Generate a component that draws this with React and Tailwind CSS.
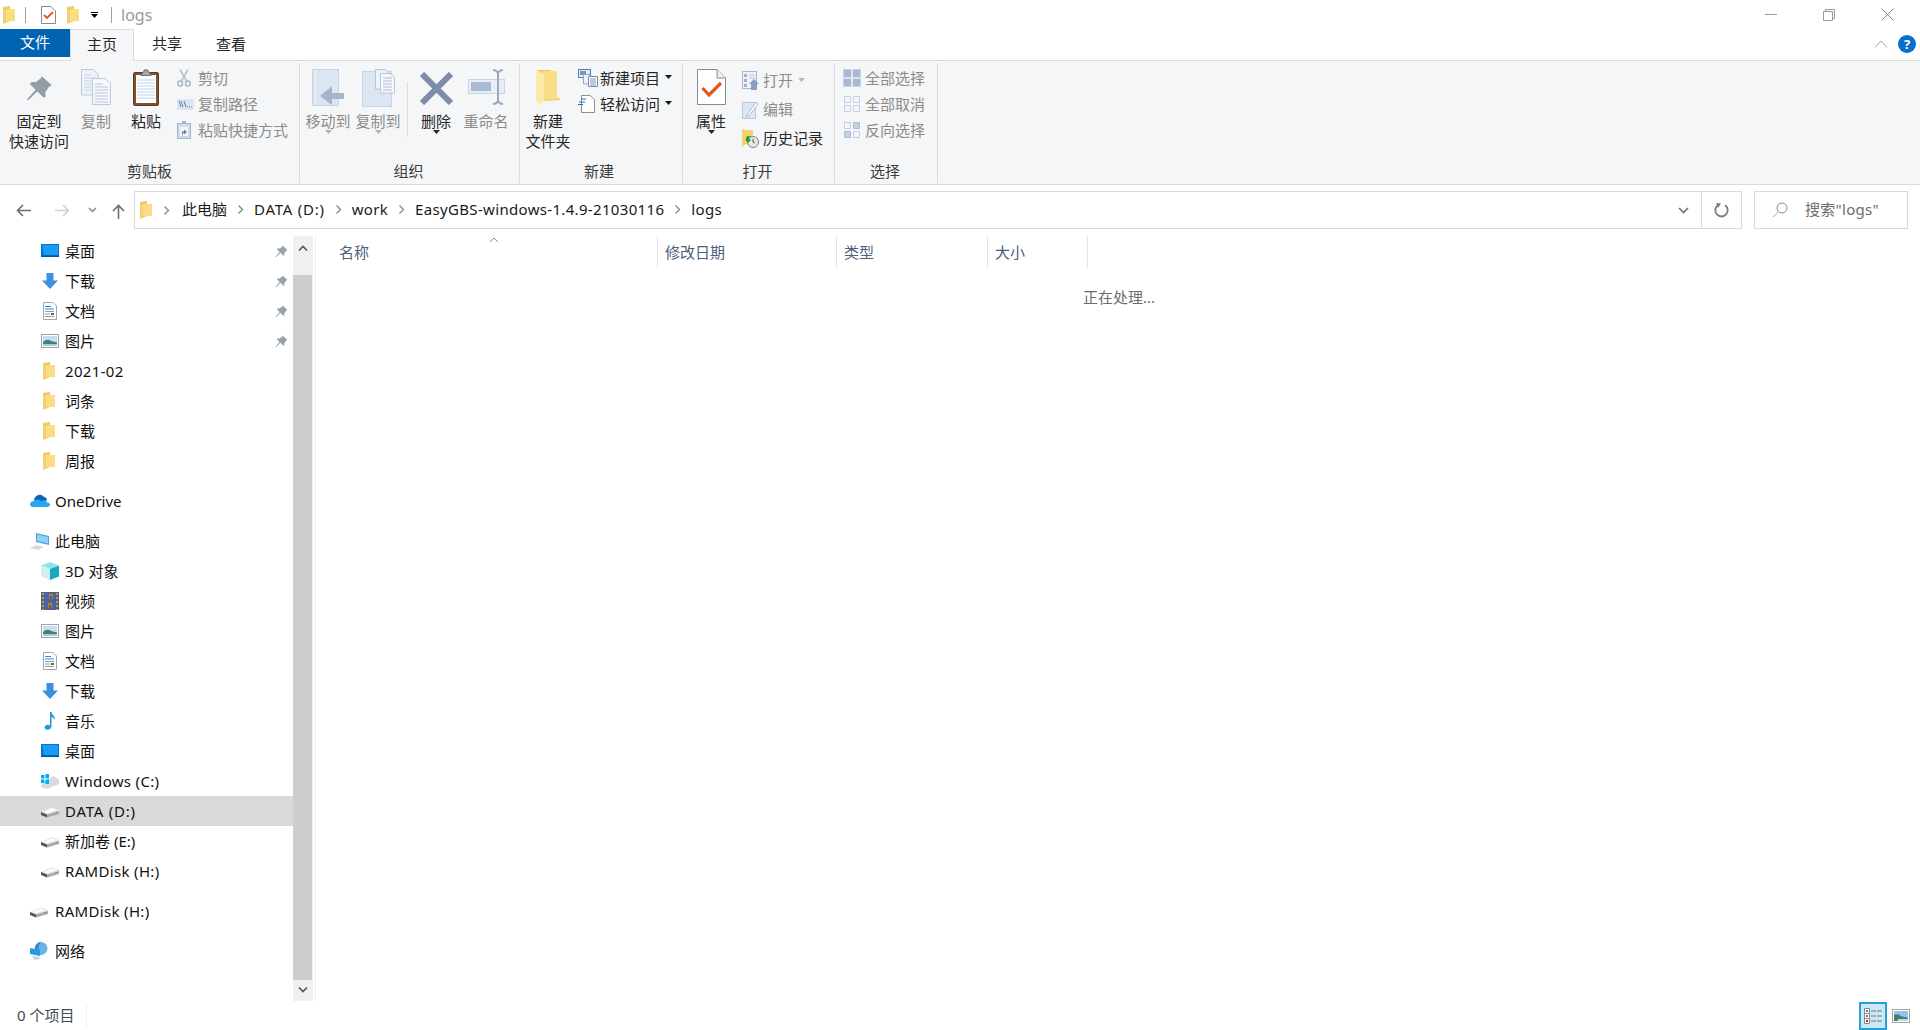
import React from 'react';

// Windows 10 File Explorer, "logs" folder while it is still loading

const Pin = ({ size = 13, color = '#97a1aa' }) => (
  <svg width={size} height={size} viewBox="0 0 24 24">
    <path fill={color} d="M14 1 L23 9 L20.5 10.5 L17 15.5 L17.5 19 L15.5 20 L10 14.5 L2 22.5 L1 21.5 L8.5 13 L3.5 8 L5 6 L8.5 6.5 L13 3 Z" />
  </svg>
);

const Folder = ({ w = 12, h = 18 }) => (
  <svg width={w} height={h} viewBox="0 0 12 18">
    <path fill="#f3c75f" d="M0 1 L7 0 L7 15 L0 18 Z" />
    <path fill="#fbdc85" d="M1 3 L12 3 L12 15 L3 15 L1 17 Z" />
    <path fill="#f6d06e" d="M0 2 L3 3.5 L3 15.5 L0 17.5 Z" />
  </svg>
);

const BigFolder = () => (
  <svg width="24" height="36" viewBox="0 0 24 36">
    <path fill="#f2c55c" d="M1 1 L15 1 L15 30 L1 30 Z" />
    <path fill="#fbdd88" d="M7 2 L21 2 L21 28 L24 29 L24 30 L7 30 Z" />
    <path fill="#ffe9a8" d="M0 0 L8 5 L8 32 L2 36 L0 30 Z" />
    <path fill="#f7cf68" d="M8 5 L8 30 L24 30 L24 31 L8 32 Z" />
  </svg>
);

const Desktop = () => (
  <svg width="18" height="14" viewBox="0 0 18 14">
    <rect width="18" height="13" fill="#0078d7" />
    <path fill="#1b9cf2" d="M1 1 H17 V11 H3 Z" />
    <rect x="0" y="11.5" width="18" height="1.5" fill="#005a9e" />
  </svg>
);

const Download = () => (
  <svg width="18" height="17" viewBox="0 0 18 17">
    <path fill="#3d8fe0" d="M5.5 0 H12.5 V7.5 H17 L9 16 L1 7.5 H5.5 Z" />
  </svg>
);

const Doc = () => (
  <svg width="16" height="18" viewBox="0 0 16 18">
    <path fill="#fff" stroke="#a5a5a5" d="M1.5 .5 H11 L14.5 4 V17.5 H1.5 Z" />
    <path stroke="#2a8fdc" d="M3 4.5 H9 M3 7 H12" />
    <path stroke="#9c9c9c" d="M3 9.5 H12 M3 12 H8 M3 14.5 H12" />
    <rect x="9" y="11" width="3" height="2" fill="#3d7a5a" />
  </svg>
);

const Picture = () => (
  <svg width="18" height="14" viewBox="0 0 18 14">
    <rect x=".5" y=".5" width="17" height="13" fill="#fff" stroke="#a3a3a3" />
    <rect x="2" y="2" width="14" height="10" fill="#c5def2" />
    <path fill="#47806f" d="M2 8 Q6 4 10 7 L16 8.5 V12 H2 Z" />
    <path fill="#a9c8d9" d="M2 10 H16 V12 H2 Z" />
  </svg>
);

const Onedrive = () => (
  <svg width="20" height="14" viewBox="0 0 20 14">
    <path fill="#0a64b8" d="M4 6 C5 1 11 -1 14 3 C16 3 17 5 17 6 L8 11 Z" />
    <path fill="#27a5ee" d="M3 13 C-1 13 -1 7 4 7 C6 5 9 5 11 7 C13 5.5 17 6 17 8.5 C21 8.5 21 13 17 13 Z" />
  </svg>
);

const Computer = () => (
  <svg width="20" height="17" viewBox="0 0 20 17">
    <path fill="#4ba6e0" d="M6 0 L19 3 V12 L6 9 Z" />
    <path fill="#8fd0f5" d="M7 1.5 L18 4 V10.5 L7 8 Z" />
    <path fill="#d6d8da" d="M0 15 L6 12 L14 14 L8 17 Z" />
  </svg>
);

const Cube = () => (
  <svg width="18" height="18" viewBox="0 0 18 18">
    <path fill="#8fe3ee" d="M9 0 L18 3.5 L9 7 L0 3.5 Z" />
    <path fill="#d2f1ee" d="M0 3.5 L9 7 V18 L0 14.5 Z" />
    <path fill="#1ba7bd" d="M18 3.5 L9 7 V18 L18 14.5 Z" />
  </svg>
);

const Film = () => (
  <svg width="18" height="18" viewBox="0 0 18 18">
    <rect width="18" height="18" fill="#5e5e5e" />
    <rect x="4" y="1" width="10" height="7.5" fill="#3f68c2" />
    <rect x="4" y="9.5" width="10" height="7.5" fill="#3f68c2" />
    <rect x="8" y="2" width="4" height="5" fill="#c9772f" />
    <rect x="9" y="4" width="2" height="3" fill="#2f7d3b" />
    <rect x="7" y="11" width="4" height="5" fill="#c9772f" />
    <rect x="8" y="13" width="2" height="3" fill="#2f7d3b" />
    <path stroke="#e4e4e4" strokeDasharray="2 2" d="M2 1 V18 M16 1 V18" />
  </svg>
);

const Music = () => (
  <svg width="12" height="18" viewBox="0 0 12 18">
    <path fill="#1e9be8" d="M6 0 H7.5 C8 3 11.5 4 11 8 C10 6 9 5.5 7.5 5 V14.5 C7.5 17 4.5 18 2.5 17.5 C0 17 0 14 2.5 13 C4 12.5 5 12.7 6 13.2 Z" />
  </svg>
);

const Windows = () => (
  <svg width="18" height="15" viewBox="0 0 18 15">
    <path fill="#d9dbdd" d="M0 11 L12 2 L18 5 V10 L6 15 L0 13 Z" />
    <path fill="#00adef" d="M0 1 H3.5 V4.5 H0 Z M4.5 0 H8 V4.5 H4.5 Z M0 5.5 H3.5 V9 H0 Z M4.5 5.5 H8 V10 H4.5 Z" />
  </svg>
);

const Drive = () => (
  <svg className="mt-[3px]" width="18" height="11" viewBox="0 0 18 11">
    <path fill="#e4e4e4" d="M0 5 L11 0 L18 3 V6 L6 9 Z" />
    <path fill="#fafafa" d="M2 5 L11 1 L16 3 L6 6.5 Z" />
    <path fill="#555" d="M0 5 L6 7.5 V10.5 L0 8 Z" />
    <path fill="#a9a9a9" d="M6 7.5 L18 4 V7 L6 10.5 Z" />
    <rect x="14.5" y="5" width="1.5" height="1" fill="#3aa655" />
  </svg>
);

const Network = () => (
  <svg width="18" height="18" viewBox="0 0 18 18">
    <circle cx="11" cy="6.5" r="6.5" fill="#6db3e8" />
    <path fill="#3f87c9" d="M11 0 C8 3 8 10 11 13 C9 13 5 10 5 6.5 C5 3 8 0 11 0 Z" />
    <path fill="#1f9be3" d="M0 6 L10 8 V14 L0 12 Z" />
    <path fill="#cfd3d6" d="M2 14 L8 14.5 L11 17 L4 18 Z" />
  </svg>
);

const Copy = () => (
  <svg width="30" height="36" viewBox="0 0 30 36">
    <path fill="#eef2f9" stroke="#bcc9de" d="M.5 .5 H12 L17 5 V26 H.5 Z" />
    <path stroke="#c7d3e6" d="M3 6 H10 M3 9 H14 M3 12 H14 M3 15 H14 M3 18 H14 M3 21 H14" />
    <path fill="#f5f7fb" stroke="#bcc9de" d="M11.5 9.5 H24 L29.5 14 V35.5 H11.5 Z" />
    <path stroke="#b7c5dc" d="M14 15 H22 M14 18 H27 M14 21 H27 M14 24 H27 M14 27 H27 M14 30 H27 M14 33 H27" />
  </svg>
);

const Paste = () => (
  <svg width="26" height="37" viewBox="0 0 26 37">
    <rect x=".5" y="3.5" width="25" height="33" rx="1.5" fill="#7d5233" stroke="#5d3a20" />
    <rect x="3" y="6" width="20" height="28" fill="#fff" />
    <path stroke="#b9d3ec" d="M4 11 H22 M4 14 H22 M4 17 H22 M4 20 H22 M4 23 H22 M4 26 H22 M4 29 H22" />
    <path fill="#aaa" stroke="#6f6f6f" d="M8 6.5 L10 3 H11 V1 H15 V3 H16 L18 6.5 Z" />
  </svg>
);

const Scissors = () => (
  <svg width="14" height="18" viewBox="0 0 14 18">
    <g fill="none" stroke="#a9b5c9" strokeWidth="1.5">
      <circle cx="3" cy="14.5" r="2.5" />
      <circle cx="11" cy="14.5" r="2.5" />
      <path d="M4.5 12 L11 .5 M9.5 12 L3 .5" />
    </g>
  </svg>
);

const CopyPath = () => (
  <svg width="17" height="11" viewBox="0 0 17 11">
    <rect width="17" height="11" fill="#dbe4f1" />
    <path stroke="#76859b" fill="none" d="M2 2 L4 8 M4 2 L6 8 M7 2 L9 8" />
    <path stroke="#76859b" strokeDasharray="1 1" d="M10 8 H16" />
  </svg>
);

const PasteShortcut = () => (
  <svg width="14" height="18" viewBox="0 0 14 18">
    <rect x=".5" y="2.5" width="13" height="15" fill="#cfdaea" stroke="#a9b6ca" />
    <rect x="5" y="0" width="4" height="3" fill="#a9b6ca" />
    <rect x="3" y="6" width="8" height="9" fill="#f3f6fb" />
    <path fill="#71819b" d="M5 14 V10.5 H7 V8.5 L10 11 L7 13.5 V12 H6 V14 Z" />
  </svg>
);

const MoveTo = () => (
  <svg width="33" height="38" viewBox="0 0 33 38">
    <rect x=".5" y=".5" width="26" height="36" fill="#dce5f2" stroke="#c7d4e6" />
    <rect x="3" y="1" width="1" height="35" fill="#eef3fa" />
    <path fill="#a5b5cc" d="M20 17 V24 H32 V30 H20 V36 L8 27 Z" />
  </svg>
);

const CopyTo = () => (
  <svg width="33" height="38" viewBox="0 0 33 38">
    <rect x=".5" y="2.5" width="29" height="35" fill="#dce5f2" stroke="#c7d4e6" />
    <path fill="#eef2f9" stroke="#b7c5dc" d="M13.5 .5 H23 L27 4 V20 H13.5 Z" />
    <path fill="#f5f7fb" stroke="#b7c5dc" d="M18.5 4.5 H28 L32.5 8 V24 H18.5 Z" />
    <path stroke="#aebcd3" d="M21 9 H30 M21 12 H30 M21 15 H30 M21 18 H30 M21 21 H30" />
  </svg>
);

const Delete = () => (
  <svg width="33" height="33" viewBox="0 0 33 33">
    <path stroke="#7c8ca9" strokeWidth="6" d="M2 2 L31 31 M31 2 L2 31" />
  </svg>
);

const Rename = () => (
  <svg width="37" height="36" viewBox="0 0 37 36">
    <rect x=".5" y="10.5" width="36" height="14" fill="#e8eef8" stroke="#c7d4e6" />
    <rect x="3" y="13" width="20" height="9" fill="#a9b9d0" />
    <path stroke="#9aa9c0" strokeWidth="2" fill="none" d="M25 1 C28 1 29 2 30 4 C31 2 32 1 35 1 M30 4 V32 M25 35 C28 35 29 34 30 32 C31 34 32 35 35 35" />
  </svg>
);

const NewItem = () => (
  <svg width="20" height="18" viewBox="0 0 20 18">
    <rect x=".5" y=".5" width="12" height="8" fill="#e2ecf8" stroke="#3f87b8" />
    <rect x="2" y="2" width="6" height="4" fill="#7d94b3" />
    <path fill="#eef2f9" stroke="#9fa8b4" d="M5.5 5.5 H12 V15 H5.5 Z" />
    <path fill="#fff" stroke="#6e8cb0" d="M10.5 7.5 H19.5 V17.5 H10.5 Z" />
    <path stroke="#7f95b5" d="M12 10 H18 M12 12 H18 M12 14 H18 M12 16 H18" />
  </svg>
);

const EasyAccess = () => (
  <svg width="17" height="18" viewBox="0 0 17 18">
    <path fill="#fff" stroke="#8f8f8f" d="M3.5 .5 H12 L16.5 4.5 V17.5 H3.5 Z" />
    <path stroke="#1a72bb" strokeWidth="1.2" d="M3 4 H8 M1 7 H7 M0 9.5 H5" />
  </svg>
);

const Properties = () => (
  <svg width="29" height="36" viewBox="0 0 29 36">
    <path fill="#fff" stroke="#8a8a8a" d="M.5 .5 H20 L28.5 9 V35.5 H.5 Z" />
    <path fill="#eee" stroke="#8a8a8a" d="M20 .5 V9 H28.5" />
    <path fill="none" stroke="#e8541c" strokeWidth="3.2" d="M5.5 19 L12 26 L24 14" />
  </svg>
);

const OpenIcon = () => (
  <svg width="17" height="19" viewBox="0 0 17 19">
    <rect x=".5" y=".5" width="14" height="17" fill="#eef2f9" stroke="#a9b6ca" />
    <path fill="#a0b0c8" d="M2 3 H5 V6 H2 Z M2 8 H5 V11 H2 Z M2 13 H5 V16 H2 Z" />
    <path stroke="#b7c3d6" d="M7 4 H13 M7 7 H13" />
    <path fill="#8ba0bc" d="M12 8 L17 13 H15 V19 H9 V13 H7 Z" />
  </svg>
);

const EditIcon = () => (
  <svg width="16" height="18" viewBox="0 0 16 18">
    <rect x=".5" y="1.5" width="13" height="16" fill="#dde6f3" stroke="#b9c7dc" />
    <path fill="#fff" stroke="#a9b9d0" d="M5 14 L14 1 L16 3 L7 15 L4.5 16 Z" />
  </svg>
);

const History = () => (
  <svg width="17" height="19" viewBox="0 0 17 19">
    <path fill="#f6d26e" d="M0 0 L4 1 H11 V15 H4 L0 18 Z" />
    <circle cx="11" cy="13" r="5.5" fill="#e9e9e9" stroke="#808080" />
    <path stroke="#555" fill="none" d="M11 10 V13 L13 14" />
    <path fill="#1ea32c" d="M5 7 L9 7.5 L6.5 9.5 L9 11 L6 14 L3.5 11 Z" />
  </svg>
);

const Grid4 = () => (
  <svg width="18" height="18" viewBox="0 0 18 18">
    <rect width="18" height="18" fill="#c5d2e5" />
    <path fill="#a9b9d3" d="M1 1 H8 V8 H1 Z M10 1 H17 V8 H10 Z M1 10 H8 V17 H1 Z M10 10 H17 V17 H10 Z" />
    <path stroke="#eef3fa" strokeWidth="1.2" d="M9 0 V18 M0 9 H18" />
  </svg>
);

const GridNone = () => (
  <svg width="18" height="18" viewBox="0 0 18 18">
    <path fill="#f3f6fa" stroke="#c2cfe2" d="M1.5 1.5 H7.5 V7.5 H1.5 Z M10.5 1.5 H16.5 V7.5 H10.5 Z M1.5 10.5 H7.5 V16.5 H1.5 Z M10.5 10.5 H16.5 V16.5 H10.5 Z" />
  </svg>
);

const GridInvert = () => (
  <svg width="18" height="18" viewBox="0 0 18 18">
    <path fill="#f3f6fa" stroke="#c2cfe2" d="M1.5 1.5 H7.5 V7.5 H1.5 Z M10.5 10.5 H16.5 V16.5 H10.5 Z" />
    <path fill="#c5d2e5" stroke="#aebcd4" d="M10.5 1.5 H16.5 V7.5 H10.5 Z M1.5 10.5 H7.5 V16.5 H1.5 Z" />
  </svg>
);

const Caret = ({ color = '#1a1a1a' }) => (
  <svg width="7" height="4" viewBox="0 0 7 4">
    <path fill={color} d="M0 0 H7 L3.5 4 Z" />
  </svg>
);

const Chev = () => (
  <svg width="7" height="11" viewBox="0 0 7 11">
    <path fill="none" stroke="#8a8a8a" strokeWidth="1.4" d="M1.5 1.5 L5.5 5.5 L1.5 9.5" />
  </svg>
);

// big ribbon button: icon on top, one or two lines below
const LargeBtn = ({ icon, lines, muted, caret, className }) => (
  <div className={`flex flex-col items-center ${className}`}>
    <div className="h-[50px] pt-[8px] flex items-start justify-center">{icon}</div>
    {lines.map((l) => (
      <div key={l} className={`h-[20px] leading-[20px] whitespace-nowrap ${muted ? 'text-[#8c8c8c]' : 'text-[#262626]'}`}>{l}</div>
    ))}
    {caret && <div className="mt-[-1px]"><Caret color={muted ? '#b5b5b5' : '#262626'} /></div>}
  </div>
);

const SmallBtn = ({ icon, label, muted, caret, caretColor, h = 'h-[26px]', iconW = 'w-[21px]' }) => (
  <div className={`flex items-center ${h}`}>
    <div className={`${iconW} flex justify-start`}>{icon}</div>
    <span className={`whitespace-nowrap ${muted ? 'text-[#8c8c8c]' : 'text-[#262626]'}`}>{label}</span>
    {caret && <span className="ml-[5px] mb-[2px]"><Caret color={caretColor} /></span>}
  </div>
);

const Group = ({ label, className, labelClass = 'pr-[2px]', children }) => (
  <div className={`flex flex-col h-[120px] mt-[2px] border-r border-[#dcdcdc] ${className}`}>
    <div className="flex flex-1 mt-[-2px]">{children}</div>
    <div className={`h-[20px] mb-[2px] leading-[20px] text-center text-[#3c3c3c] ${labelClass}`}>{label}</div>
  </div>
);

const Ribbon = () => (
  <div className="flex h-[124px] bg-[#f5f6f7] border-b border-[#dadbdc]">
    <Group label="剪贴板" className="w-[300px]" labelClass="pr-0">
      <LargeBtn className="w-[78px]" icon={<div className="pt-[6px]"><Pin size={27} color="#939da7" /></div>} lines={['固定到', '快速访问']} />
      <LargeBtn className="w-[36px]" muted icon={<Copy />} lines={['复制']} />
      <LargeBtn className="w-[50px] ml-[7px]" icon={<Paste />} lines={['粘贴']} />
      <div className="ml-[6px] pt-[4px]">
        <SmallBtn muted icon={<Scissors />} label="剪切" />
        <SmallBtn muted icon={<CopyPath />} label="复制路径" />
        <SmallBtn muted icon={<PasteShortcut />} label="粘贴快捷方式" />
      </div>
    </Group>
    <Group label="组织" className="w-[220px]">
      <LargeBtn className="w-[50px] ml-[3px]" muted caret icon={<MoveTo />} lines={['移动到']} />
      <LargeBtn className="w-[50px]" muted caret icon={<CopyTo />} lines={['复制到']} />
      <div className="w-px h-[55px] mt-[21px] ml-[4px] bg-[#dcdcdc]" />
      <LargeBtn className="w-[50px] ml-[3px]" caret icon={<div className="pt-[3px]"><Delete /></div>} lines={['删除']} />
      <LargeBtn className="w-[48px] ml-[1px]" muted icon={<Rename />} lines={['重命名']} />
    </Group>
    <Group label="新建" className="w-[163px]" labelClass="pr-[4px]">
      <LargeBtn className="w-[56px]" icon={<BigFolder />} lines={['新建', '文件夹']} />
      <div className="ml-[2px] pt-[4px]">
        <SmallBtn icon={<NewItem />} label="新建项目" caret iconW="w-[22px]" />
        <SmallBtn icon={<EasyAccess />} label="轻松访问" caret iconW="w-[22px]" />
      </div>
    </Group>
    <Group label="打开" className="w-[152px]">
      <LargeBtn className="w-[56px]" caret icon={<Properties />} lines={['属性']} />
      <div className="ml-[3px] pt-[5px]">
        <SmallBtn muted icon={<OpenIcon />} label="打开" caret caretColor="#b8b8b8" h="h-[29px]" />
        <SmallBtn muted icon={<EditIcon />} label="编辑" h="h-[29px]" />
        <SmallBtn icon={<History />} label="历史记录" h="h-[29px]" />
      </div>
    </Group>
    <Group label="选择" className="w-[103px]">
      <div className="ml-[8px] pt-[4px]">
        <SmallBtn muted icon={<Grid4 />} label="全部选择" iconW="w-[22px]" />
        <SmallBtn muted icon={<GridNone />} label="全部取消" iconW="w-[22px]" />
        <SmallBtn muted icon={<GridInvert />} label="反向选择" iconW="w-[22px]" />
      </div>
    </Group>
  </div>
);

const NavRow = ({ icon, label, pinned, top, active, latin, wide }) => (
  <div className={`flex items-center h-[30px] ${active ? 'bg-[#d9d9d9]' : ''}`}>
    <div className={`${top ? 'w-[55px] pl-[30px]' : 'w-[65px] pl-[41px]'} flex items-center shrink-0`}>{icon}</div>
    <span className={`flex-1 text-[#111] whitespace-nowrap ${latin ? 'tracking-[0.33px]' : ''} ${wide ? 'tracking-[0.75px]' : ''}`}>{label}</span>
    {pinned && <span className="pr-[5px] pt-[1px]"><Pin /></span>}
  </div>
);

const NavPane = () => (
  <div className="flex w-[316px] shrink-0 border-r border-[#f0f0f0]">
    <div className="w-[293px] shrink-0">
      <NavRow icon={<Desktop />} label="桌面" pinned />
      <NavRow icon={<Download />} label="下载" pinned />
      <NavRow icon={<div className="pl-[1px]"><Doc /></div>} label="文档" pinned />
      <NavRow icon={<Picture />} label="图片" pinned />
      <NavRow icon={<div className="pl-[2px]"><Folder /></div>} label="2021-02" latin />
      <NavRow icon={<div className="pl-[2px]"><Folder /></div>} label="词条" />
      <NavRow icon={<div className="pl-[2px]"><Folder /></div>} label="下载" />
      <NavRow icon={<div className="pl-[2px]"><Folder /></div>} label="周报" />
      <div className="h-[10px]" />
      <NavRow top icon={<Onedrive />} label="OneDrive" />
      <div className="h-[10px]" />
      <NavRow top icon={<Computer />} label="此电脑" />
      <NavRow icon={<Cube />} label="3D 对象" />
      <NavRow icon={<Film />} label="视频" />
      <NavRow icon={<Picture />} label="图片" />
      <NavRow icon={<div className="pl-[1px]"><Doc /></div>} label="文档" />
      <NavRow icon={<Download />} label="下载" />
      <NavRow icon={<div className="pl-[3px]"><Music /></div>} label="音乐" />
      <NavRow icon={<Desktop />} label="桌面" />
      <NavRow icon={<Windows />} label="Windows (C:)" latin />
      <NavRow icon={<Drive />} label="DATA (D:)" active wide />
      <NavRow icon={<Drive />} label="新加卷 (E:)" />
      <NavRow icon={<Drive />} label="RAMDisk (H:)" latin />
      <div className="h-[10px]" />
      <NavRow top icon={<Drive />} label="RAMDisk (H:)" latin />
      <div className="h-[10px]" />
      <NavRow top icon={<Network />} label="网络" />
    </div>
    <div className="w-[20px] bg-[#f0f0f0] flex flex-col">
      <div className="h-[39px] flex justify-center pt-[9px]">
        <svg width="10" height="6" viewBox="0 0 10 6"><path fill="none" stroke="#555" strokeWidth="1.6" d="M1 5.5 L5 1.5 L9 5.5" /></svg>
      </div>
      <div className="flex-1 bg-[#cdcdcd] mr-[1px]" />
      <div className="h-[21px] flex justify-center pt-[7px]">
        <svg width="10" height="6" viewBox="0 0 10 6"><path fill="none" stroke="#555" strokeWidth="1.6" d="M1 .5 L5 4.5 L9 .5" /></svg>
      </div>
    </div>
  </div>
);

const HeaderCell = ({ label, className }) => (
  <div className={`h-[32px] leading-[32px] border-r border-[#e5e5e5] text-[#4c607a] text-[15px] ${className}`}>{label}</div>
);

const FileList = () => (
  <div className="flex-1">
    <div className="relative flex pl-[8px]">
      <HeaderCell label="名称" className="w-[334px] pl-[15px]" />
      <HeaderCell label="修改日期" className="w-[179px] pl-[7px]" />
      <HeaderCell label="类型" className="w-[151px] pl-[7px]" />
      <HeaderCell label="大小" className="w-[100px] pl-[7px]" />
      <svg className="absolute left-[173px] top-[1px]" width="10" height="6" viewBox="0 0 10 6">
        <path fill="none" stroke="#8c8c8c" d="M1 5 L5 1 L9 5" />
      </svg>
    </div>
    <div className="pl-[767px] mt-[19px] leading-[20px] text-[15px] text-[#6d6d6d]">正在处理...</div>
  </div>
);

const Crumb = ({ children, className = '' }) => (
  <span className={`whitespace-nowrap text-[#1a1a1a] ${className}`}>{children}</span>
);
const Sep = () => <span className="mx-[10px] flex items-center"><Chev /></span>;

export default function App() {
  return (
    <div
      className="w-[1920px] h-[1030px] overflow-hidden bg-white flex flex-col text-[15px] select-none"
      style={{ fontFamily: '"Noto Sans", "Noto Sans CJK SC", sans-serif' }}
    >
      {/* title bar */}
      <div className="flex items-center h-[29px] shrink-0">
        <div className="pl-[3px] pt-[1px]"><Folder /></div>
        <div className="w-px h-[16px] bg-[#a0a0a0] ml-[10px]" />
        <div className="ml-[15px]">
          <svg width="15" height="18" viewBox="0 0 15 18">
            <path fill="#fff" stroke="#8a8a8a" d="M.5 .5 H10 L14.5 5 V17.5 H.5 Z" />
            <path fill="none" stroke="#e8541c" strokeWidth="1.8" d="M3 9 L6 12 L12 6" />
          </svg>
        </div>
        <div className="ml-[11px] pt-[1px]"><Folder /></div>
        <div className="ml-[12px] flex flex-col items-center gap-[1px]">
          <div className="w-[7px] h-px bg-black" />
          <Caret color="#000" />
        </div>
        <div className="w-px h-[16px] bg-[#a0a0a0] ml-[13px]" />
        <span className="ml-[9px] text-[#9a9a9a] text-[16px]">logs</span>
        <div className="ml-auto flex items-center">
          <div className="w-[58px] flex justify-center"><div className="w-[12px] h-px bg-[#9a9a9a]" /></div>
          <div className="w-[58px] flex justify-center">
            <svg width="12" height="12" viewBox="0 0 12 12"><path fill="none" stroke="#9a9a9a" d="M.5 2.5 H9.5 V11.5 H.5 Z M2.5 2.5 V.5 H11.5 V9.5 H9.5" /></svg>
          </div>
          <div className="w-[58px] mr-[4px] flex justify-center">
            <svg width="13" height="13" viewBox="0 0 13 13"><path stroke="#8a8a8a" d="M.5 .5 L12.5 12.5 M12.5 .5 L.5 12.5" /></svg>
          </div>
        </div>
      </div>

      {/* ribbon tabs */}
      <div className="flex h-[32px] shrink-0 border-b border-[#dadbdc]">
        <div className="w-[70px] h-[28px] bg-[#0063b1] text-white text-center leading-[27px]">文件</div>
        <div className="w-[64px] h-[32px] bg-[#f5f6f7] border-x border-t border-[#dadbdc] text-center leading-[28px] text-[#262626]">主页</div>
        <div className="w-[66px] text-center leading-[29px] text-[#262626]">共享</div>
        <div className="w-[62px] text-center leading-[30px] text-[#262626]">查看</div>
        <div className="ml-auto flex items-center h-[30px]">
          <svg width="14" height="8" viewBox="0 0 14 8"><path fill="none" stroke="#a6a6a6" d="M1 7.5 L7 1 L13 7.5" /></svg>
          <div className="w-[18px] h-[18px] ml-[10px] mr-[4px] rounded-full bg-[#0a6fc9] text-white text-[13px] font-bold text-center leading-[18px]">?</div>
        </div>
      </div>

      <Ribbon />

      {/* address bar */}
      <div className="flex items-center h-[51px] shrink-0 pb-[1px]">
        <div className="w-[134px] flex items-center shrink-0 pl-[16px]">
          <svg width="15" height="13" viewBox="0 0 15 13"><path fill="none" stroke="#6d6d6d" strokeWidth="1.6" d="M15 6.5 H1.5 M7 1 L1.5 6.5 L7 12" /></svg>
          <svg className="ml-[24px]" width="15" height="13" viewBox="0 0 15 13"><path fill="none" stroke="#d2d2d2" strokeWidth="1.6" d="M0 6.5 H13.5 M8 1 L13.5 6.5 L8 12" /></svg>
          <svg className="ml-[18px]" width="9" height="6" viewBox="0 0 9 6"><path fill="none" stroke="#8a8a8a" strokeWidth="1.5" d="M1 1 L4.5 4.5 L8 1" /></svg>
          <svg className="ml-[15px] mt-[2px]" width="13" height="15" viewBox="0 0 13 15"><path fill="none" stroke="#6d6d6d" strokeWidth="1.6" d="M6.5 15 V1.5 M1 7 L6.5 1.5 L12 7" /></svg>
        </div>
        <div className="flex items-center w-[1608px] h-[38px] border border-[#d9d9d9] shrink-0">
          <div className="pl-[5px] pr-[11px]"><Folder /></div>
          <Chev />
          <span className="w-[12px]" />
          <span className="mt-[-1px] flex items-center">
            <Crumb>此电脑</Crumb>
            <Sep />
            <Crumb className="tracking-[0.75px]">DATA (D:)</Crumb>
            <Sep />
            <Crumb className="tracking-[0.33px]">work</Crumb>
            <Sep />
            <Crumb className="tracking-[0.33px]">EasyGBS-windows-1.4.9-21030116</Crumb>
            <Sep />
            <Crumb className="tracking-[0.33px]">logs</Crumb>
          </span>
          <div className="ml-auto flex items-center h-full">
            <svg width="11" height="7" viewBox="0 0 11 7"><path fill="none" stroke="#6d6d6d" strokeWidth="1.6" d="M1 1 L5.5 5.5 L10 1" /></svg>
            <div className="w-px h-full bg-[#d9d9d9] ml-[12px]" />
            <div className="w-[39px] flex justify-center">
              <svg width="15" height="15" viewBox="0 0 15 15"><path fill="none" stroke="#7a7a7a" strokeWidth="1.8" d="M4 2.2 A6.2 6.2 0 1 0 11 2.2" /><path fill="#7a7a7a" d="M2 0 L7 .5 L4 5 Z" /></svg>
            </div>
          </div>
        </div>
        <div className="flex items-center w-[154px] h-[38px] ml-[12px] border border-[#d9d9d9] shrink-0 pl-[17px]">
          <svg width="16" height="16" viewBox="0 0 16 16"><circle cx="10" cy="6" r="5" fill="none" stroke="#8a8a8a" /><path stroke="#e0a060" d="M6.5 9.5 L1 15" /></svg>
          <span className="ml-[17px] mt-[-1px] text-[#6d6d6d] whitespace-nowrap tracking-[0.3px]">搜索"logs"</span>
        </div>
      </div>

      {/* body */}
      <div className="flex h-[765px] shrink-0">
        <NavPane />
        <FileList />
      </div>

      {/* status bar */}
      <div className="flex items-center flex-1 relative">
        <span className="pl-[17px] pb-[1px] w-[87px] text-[15px] text-[#3c4a5c] border-r border-[#f0f0f0] leading-[22px]">0 个项目</span>
        <div className="ml-auto flex items-center pr-[10px]">
          <div className="w-[28px] h-[28px] bg-[#cce8f6] border-2 border-[#26a0da] flex items-center justify-center">
            <svg width="18" height="16" viewBox="0 0 18 16">
              <path fill="#fff" stroke="#8a8a8a" d="M.5 .5 H5.5 V5.5 H.5 Z M.5 5.5 H5.5 V10.5 H.5 Z M.5 10.5 H5.5 V15.5 H.5 Z" />
              <path fill="#3d8fe0" d="M2 2 H4 V4 H2 Z" />
              <path fill="#7a7a2a" d="M2 7 H4 V9 H2 Z" />
              <path fill="#b03020" d="M2 12 H4 V14 H2 Z" />
              <path stroke="#777" d="M7 3 H12 M13 3 H18 M7 8 H12 M13 8 H18 M7 13 H12 M13 13 H18" />
            </svg>
          </div>
          <div className="ml-[5px]">
            <svg width="18" height="14" viewBox="0 0 18 14">
              <rect x=".5" y=".5" width="17" height="13" fill="#fff" stroke="#a3a3a3" />
              <rect x="2" y="2" width="14" height="10" fill="#8fc3f0" />
              <path fill="#47806f" d="M2 6 Q6 4 9 7 L16 9 V12 H2 Z" />
              <path fill="#c5d9e2" d="M6 10 H16 V12 H6 Z" />
            </svg>
          </div>
        </div>
      </div>
    </div>
  );
}
